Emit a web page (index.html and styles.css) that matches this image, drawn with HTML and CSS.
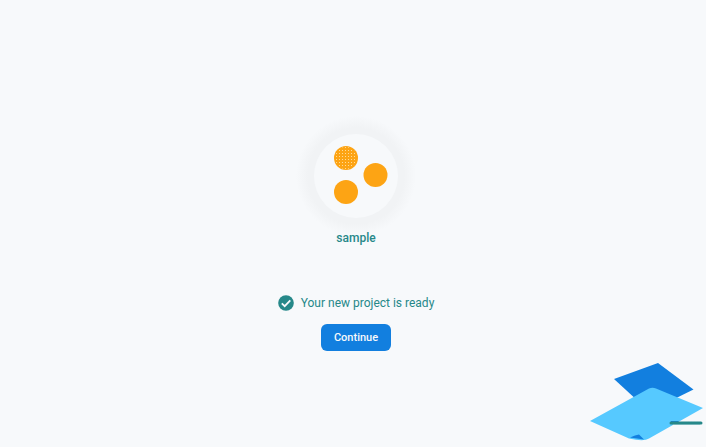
FILE: index.html
```html
<!DOCTYPE html>
<html lang="en">
<head>
<meta charset="utf-8">
<title>sample</title>
<meta name="viewport" content="width=device-width, initial-scale=1">
<link rel="stylesheet" href="styles.css">
</head>
<body>
<main class="ready">
  <svg class="logo" viewBox="0 0 120 120" aria-hidden="true">
    <defs>
      <radialGradient id="halo">
        <stop offset="0.8" stop-color="#f1f3f5"/>
        <stop offset="1" stop-color="#f1f3f5" stop-opacity="0"/>
      </radialGradient>
      <pattern id="grain" width="3" height="3" patternUnits="userSpaceOnUse">
        <rect x="1" y="1" width="1" height="1" fill="#ffdb98"/>
      </pattern>
    </defs>
    <circle cx="60" cy="60" r="60" fill="url(#halo)"/>
    <circle cx="60" cy="60" r="42" fill="#f7f9fb"/>
    <g fill="#fda414">
      <circle cx="50" cy="42" r="12"/>
      <circle cx="79.500" cy="59" r="12"/>
      <circle cx="50" cy="76" r="12"/>
    </g>
    <circle cx="50" cy="42" r="11" fill="url(#grain)"/>
  </svg>
  <h1 class="name">sample</h1>
  <p class="status">
    <svg class="check" viewBox="0 0 16 16" aria-hidden="true">
      <circle cx="8" cy="8" r="7.800" fill="#268889"/>
      <path d="M3.800 8.300l2.900 2.900 5.600-5.900" fill="none" stroke="#f7f9fb" stroke-width="1.800"/>
    </svg>
    Your new project is ready
  </p>
  <button class="continue" type="button">Continue</button>
</main>
<svg class="sheets" viewBox="0 0 116 80" aria-hidden="true">
  <path d="M24 16L68 0l35.500 26.500L68 44 49 39z" fill="#127fdf"/>
  <path d="M0 58L59 25.500q3.500-1.500 7 0L113 45 59 75.500q-5 3.500-20 0z" fill="#56c9ff"/>
  <path d="M40 74.500l5-2 4-1 5 5z" fill="#127fdf"/>
  <path d="M81 58h8l-3 3h-6z" fill="#127fdf"/>
  <path d="M81 60h30" stroke="#268889" stroke-width="3" stroke-linecap="round"/>
  <path d="M83 61.500h27" stroke="#74b4b8" stroke-width="1"/>
  <path d="M98 58.500h12" stroke="#8abfc1" stroke-width="1" stroke-dasharray="1 2"/>
</svg>
</body>
</html>
```
FILE: styles.css
```css
* {
  box-sizing: border-box;
}

body {
  margin: 0;
  min-height: 100vh;
  background: #f7f9fb;
  color: #268889;
  font-family: Roboto, "Liberation Sans", sans-serif;
  font-size: 12px;
  line-height: 16px;
}

.ready {
  display: flex;
  flex-direction: column;
  align-items: center;
  padding: 116px 0 32px 6px;
}

.logo {
  width: 120px;
  height: 120px;
}

.name {
  margin: -6px 0 49px;
  font-size: 12px;
  font-weight: 500;
}

.status {
  display: flex;
  align-items: center;
  gap: 7px;
  margin: 0 0 13px;
}

.check {
  width: 16px;
  height: 16px;
}

.continue {
  height: 27px;
  padding: 0 13px;
  border: 0;
  border-radius: 6px;
  background: #127fdf;
  color: #f7f9fb;
  font: 500 11px/16px Roboto, "Liberation Sans", sans-serif;
}

.sheets {
  position: fixed;
  right: 0;
  bottom: 4px;
  width: 116px;
  height: 80px;
}
```
